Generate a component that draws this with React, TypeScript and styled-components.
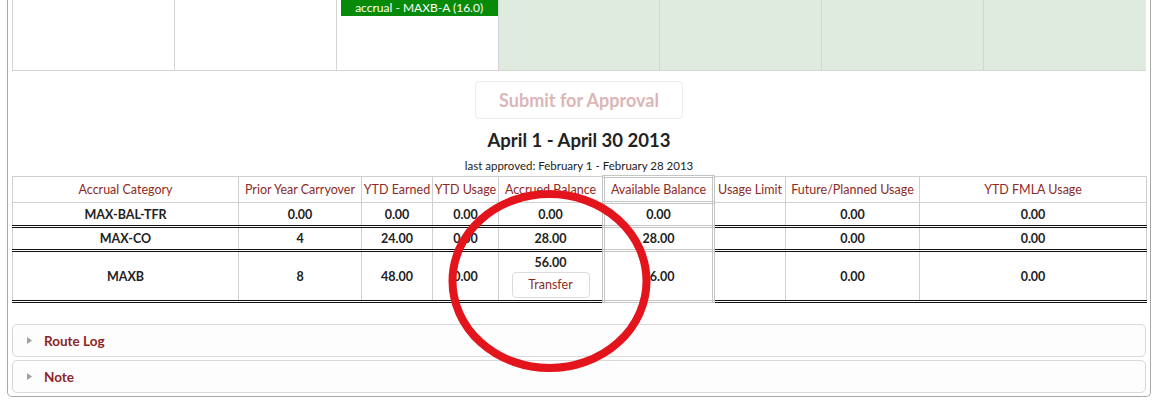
import React from "react";
import styled, { createGlobalStyle } from "styled-components";

const Global = createGlobalStyle`
  html, body { margin: 0; padding: 0; background: #fff; }
  body { font-family: Lato, "Open Sans", sans-serif; color: #222; }
`;

const Panel = styled.div`
  position: relative;
  box-sizing: border-box;
  margin-left: 7px;
  width: 1144px;
  border: 1px solid #a9a9a9;
  border-top: none;
  border-radius: 0 0 5px 5px;
  padding: 0 4px 3px 4px;
`;

const Calendar = styled.div`
  display: grid;
  grid-template-columns: repeat(7, 1fr);
  height: 71px;
  box-sizing: border-box;
  border-left: 1px solid #d4d4d4;
  border-bottom: 1px solid #d4d4d4;
`;

const DayCell = styled.div<{ $shaded?: boolean }>`
  background: ${(p) => (p.$shaded ? "#e0ebe0" : "#fff")};
  border-right: 1px solid ${(p) => (p.$shaded ? "#cfd9cf" : "#d4d4d4")};
  padding-left: 4px;
  &:last-child { border-right: none; }
`;

const Accrual = styled.div`
  background: #078a07;
  color: #fff;
  font-size: 12px;
  line-height: 16px;
  height: 16px;
  text-align: center;
`;

const Actions = styled.div`
  display: flex;
  justify-content: center;
  padding-top: 10px;
`;

const SubmitButton = styled.button`
  height: 38px;
  width: 208px;
  border: 1px solid #ececec;
  border-radius: 4px;
  background: #fff;
  color: #dbb6b6;
  font-family: Lato, "Open Sans", sans-serif;
  font-weight: 700;
  font-size: 18px;
  cursor: default;
`;

const Title = styled.h2`
  margin: 10px 0 0;
  text-align: center;
  font-size: 18.5px;
  line-height: 22px;
  font-weight: 700;
  color: #222;
`;

const Subtitle = styled.div`
  margin-top: 8px;
  text-align: center;
  font-size: 11.5px;
  line-height: 14px;
  color: #222;
`;

const Table = styled.table`
  margin-top: 2px;
  width: 1134px;
  table-layout: fixed;
  border-collapse: collapse;
  font-size: 12.5px;
`;

const Head = styled.th<{ $boxed?: boolean }>`
  font-weight: 400;
  color: #8f2a25;
  height: 23px;
  padding: 0;
  text-align: center;
  border: ${(p) => (p.$boxed ? "3px double #c4c4c4" : "1px solid #cfcfcf")};
  white-space: nowrap;
`;

const Row = styled.tr`
  border-bottom: 3px double #111;
`;

const Cell = styled.td<{ $boxed?: boolean; $tall?: boolean }>`
  font-weight: 700;
  text-align: center;
  padding: 0;
  height: ${(p) => (p.$tall ? "48px" : "21px")};
  border-left: ${(p) => (p.$boxed ? "3px double #c4c4c4" : "1px solid #cfcfcf")};
  border-right: ${(p) => (p.$boxed ? "3px double #c4c4c4" : "1px solid #cfcfcf")};
  ${(p) => (p.$boxed ? "border-top: 3px double #c4c4c4; border-bottom: 3px double #c4c4c4;" : "")}
`;

const Stack = styled.div`
  display: flex;
  flex-direction: column;
  align-items: center;
  gap: 2px;
  line-height: 15px;
`;

const TransferButton = styled.button`
  width: 78px;
  height: 26px;
  box-sizing: border-box;
  border: 1px solid #dcdcdc;
  border-radius: 4px;
  background: #fff;
  color: #8f2a25;
  font-family: Lato, "Open Sans", sans-serif;
  font-size: 12.5px;
  padding: 0;
  cursor: pointer;
`;

const Sections = styled.div`
  margin-top: 21px;
  display: flex;
  flex-direction: column;
  gap: 3px;
`;

const Section = styled.div`
  height: 33px;
  box-sizing: border-box;
  border: 1px solid #d8d8d8;
  border-radius: 5px;
  background: #fdfdfd;
  display: flex;
  align-items: center;
  padding-left: 14px;
  gap: 12px;
  color: #8b2525;
  font-weight: 700;
  font-size: 13.5px;
`;

const Circle = styled.svg`
  position: absolute;
  left: 440px;
  top: 184px;
  pointer-events: none;
`;

type R = {
  cat: string;
  prior: string;
  earned: string;
  usage: string;
  accrued: string;
  avail: string;
  limit: string;
  future: string;
  fmla: string;
  transfer?: boolean;
};

const rows: R[] = [
  { cat: "MAX-BAL-TFR", prior: "0.00", earned: "0.00", usage: "0.00", accrued: "0.00", avail: "0.00", limit: "", future: "0.00", fmla: "0.00" },
  { cat: "MAX-CO", prior: "4", earned: "24.00", usage: "0.00", accrued: "28.00", avail: "28.00", limit: "", future: "0.00", fmla: "0.00" },
  { cat: "MAXB", prior: "8", earned: "48.00", usage: "0.00", accrued: "56.00", avail: "56.00", limit: "", future: "0.00", fmla: "0.00", transfer: true },
];

const widths = [226, 123, 71, 66, 105, 110, 72, 134, 227];

const Arrow = () => (
  <svg width="5" height="7" viewBox="0 0 5 7">
    <polygon points="0,0 5,3.5 0,7" fill="#a0a0a0" />
  </svg>
);

export default function App() {
  return (
    <>
      <Global />
      <Panel>
        <Calendar>
          <DayCell />
          <DayCell />
          <DayCell>
            <Accrual>accrual - MAXB-A (16.0)</Accrual>
          </DayCell>
          <DayCell $shaded />
          <DayCell $shaded />
          <DayCell $shaded />
          <DayCell $shaded />
        </Calendar>
        <Actions>
          <SubmitButton disabled>Submit for Approval</SubmitButton>
        </Actions>
        <Title>April 1 - April 30 2013</Title>
        <Subtitle>last approved: February 1 - February 28 2013</Subtitle>
        <Table>
          <colgroup>
            {widths.map((w, i) => (
              <col key={i} style={{ width: w }} />
            ))}
          </colgroup>
          <thead>
            <tr>
              <Head>Accrual Category</Head>
              <Head>Prior Year Carryover</Head>
              <Head>YTD Earned</Head>
              <Head>YTD Usage</Head>
              <Head>Accrued Balance</Head>
              <Head $boxed>Available Balance</Head>
              <Head>Usage Limit</Head>
              <Head>Future/Planned Usage</Head>
              <Head>YTD FMLA Usage</Head>
            </tr>
          </thead>
          <tbody>
            {rows.map((r) => (
              <Row key={r.cat}>
                <Cell $tall={r.transfer}>{r.cat}</Cell>
                <Cell>{r.prior}</Cell>
                <Cell>{r.earned}</Cell>
                <Cell>{r.usage}</Cell>
                <Cell>
                  {r.transfer ? (
                    <Stack>
                      <span>{r.accrued}</span>
                      <TransferButton>Transfer</TransferButton>
                    </Stack>
                  ) : (
                    r.accrued
                  )}
                </Cell>
                <Cell $boxed>{r.avail}</Cell>
                <Cell>{r.limit}</Cell>
                <Cell>{r.future}</Cell>
                <Cell>{r.fmla}</Cell>
              </Row>
            ))}
          </tbody>
        </Table>
        <Sections>
          <Section>
            <Arrow />
            Route Log
          </Section>
          <Section>
            <Arrow />
            Note
          </Section>
        </Sections>
        <Circle width="220" height="200" viewBox="0 0 220 200">
          <ellipse cx="101.5" cy="97" rx="97" ry="87" fill="none" stroke="#e3141c" strokeWidth="8" />
        </Circle>
      </Panel>
    </>
  );
}
